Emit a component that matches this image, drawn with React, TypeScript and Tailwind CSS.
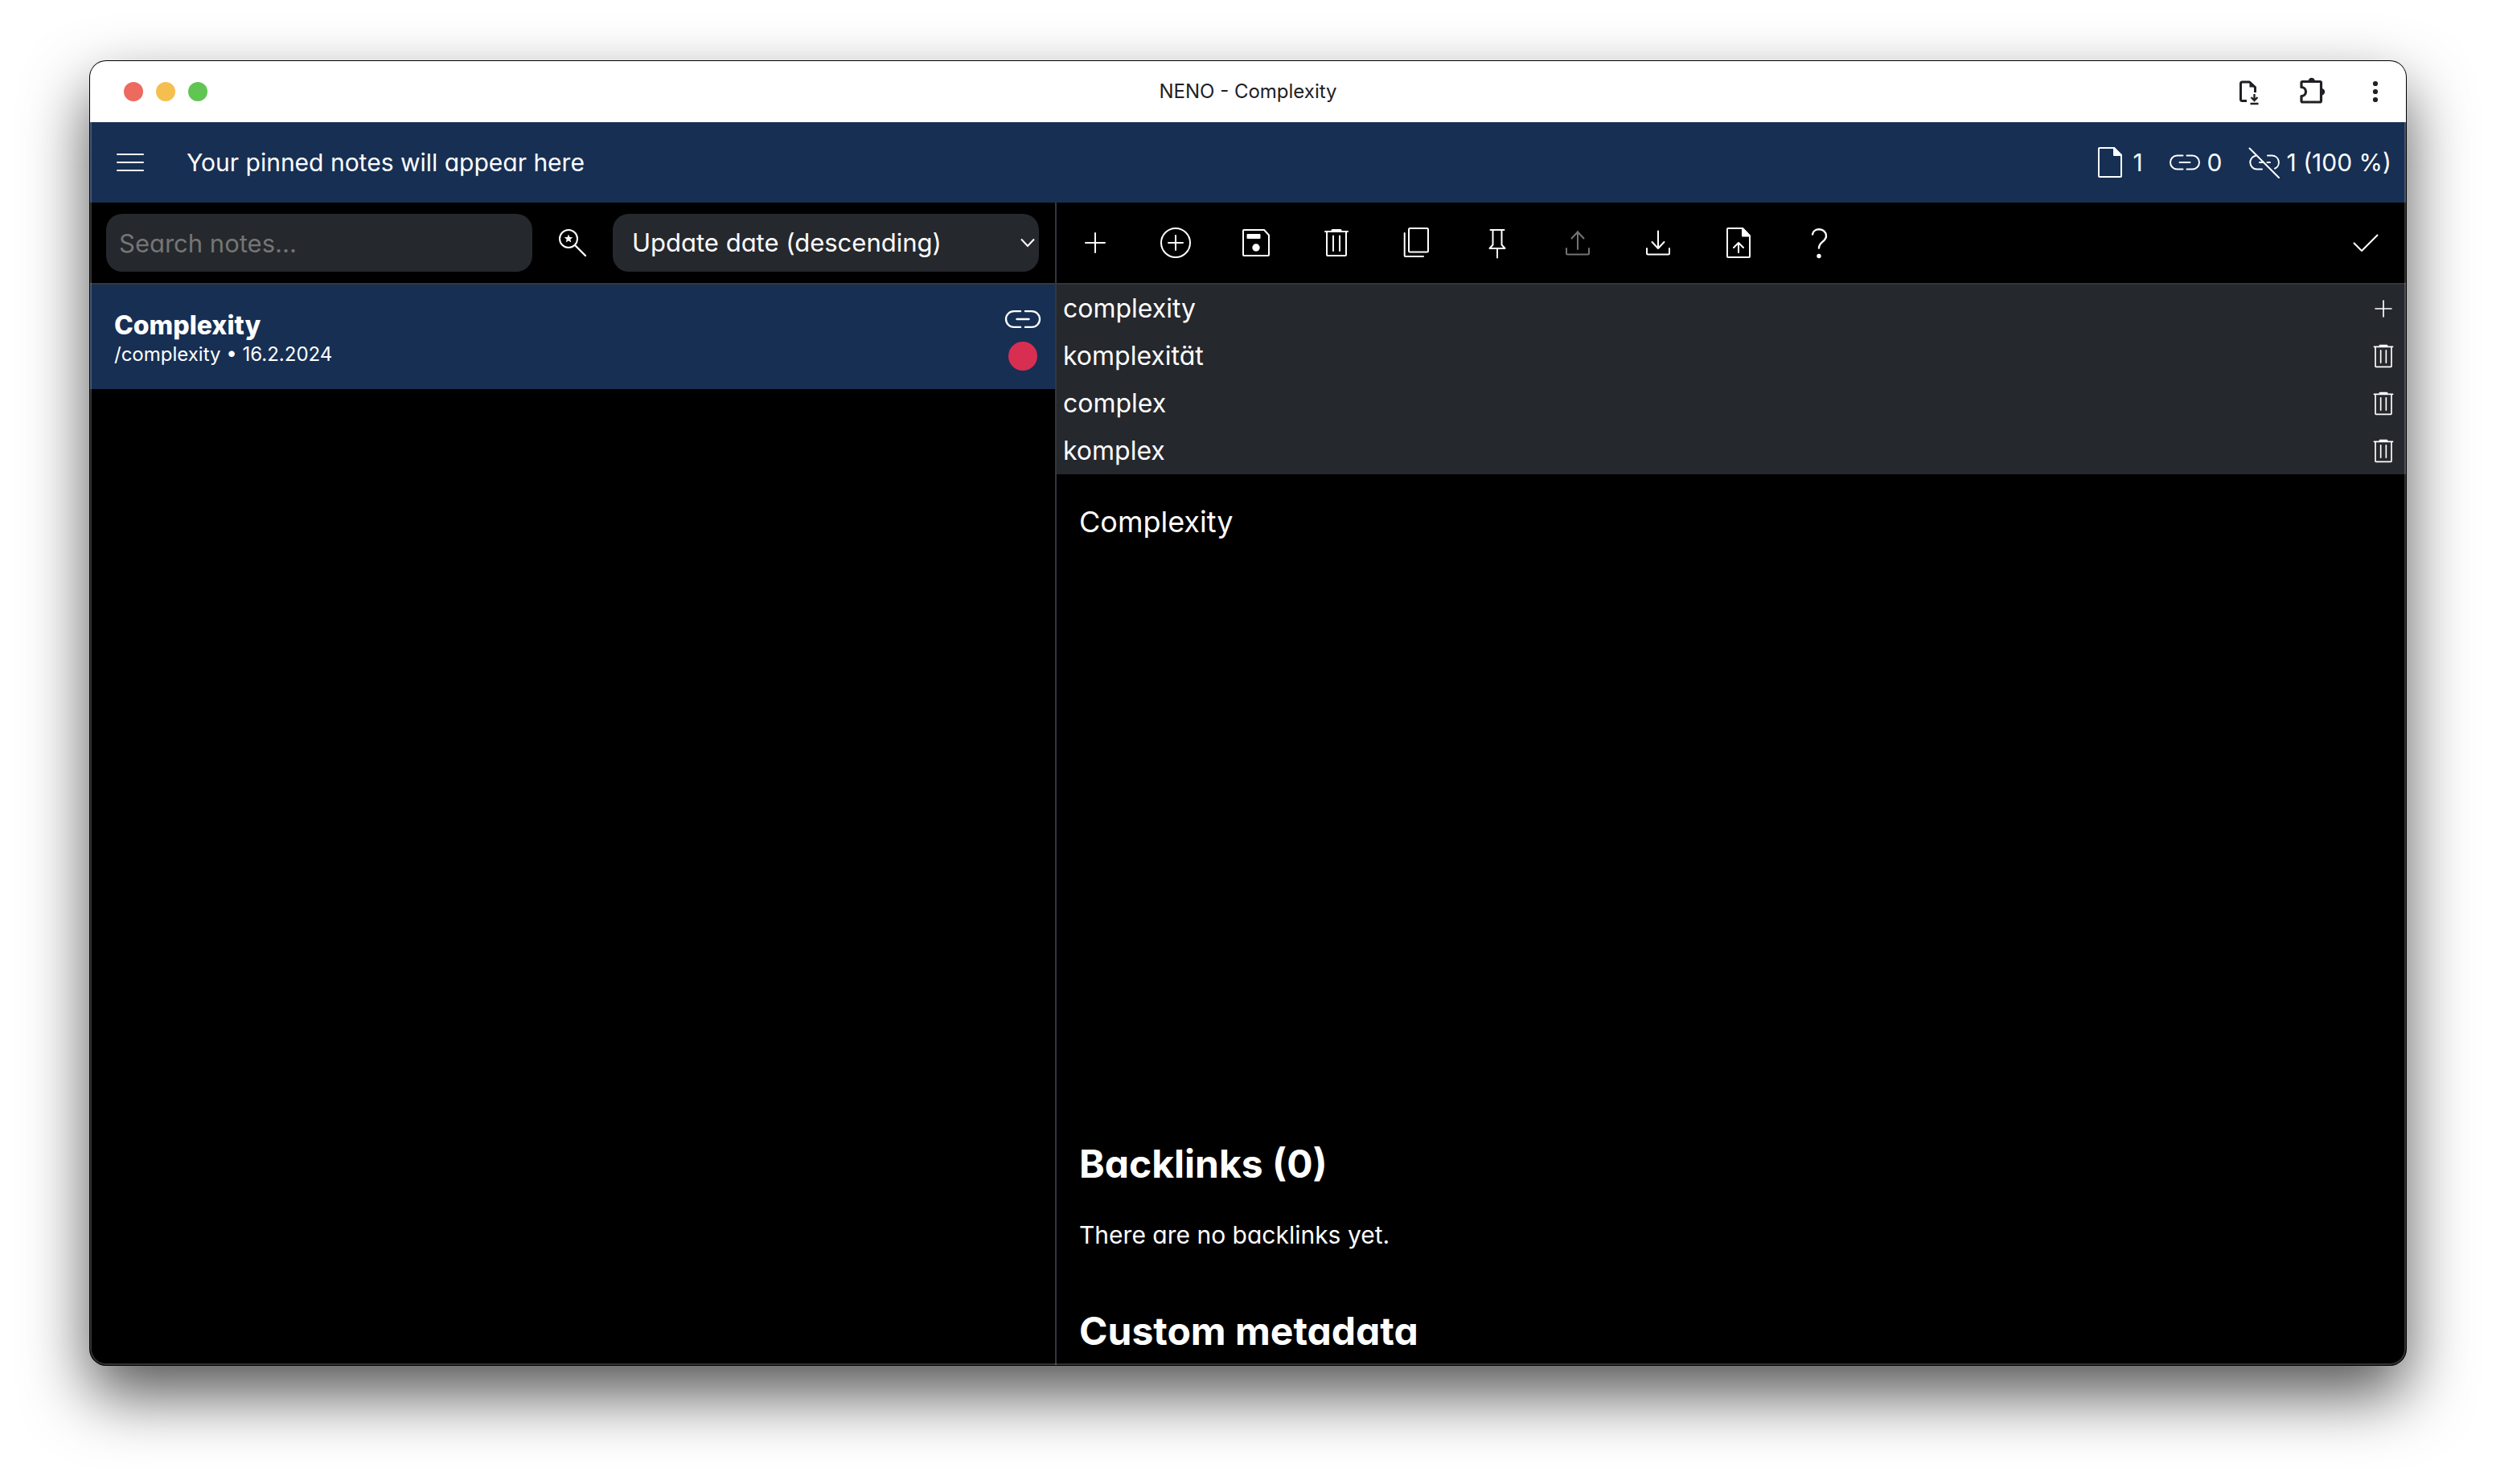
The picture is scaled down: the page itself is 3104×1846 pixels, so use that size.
import type { ReactNode } from "react";

type IconProps = { className?: string; children?: ReactNode };

function Icon({ className = "size-12", children }: IconProps) {
  return (
    <svg
      viewBox="0 0 48 48"
      fill="none"
      stroke="currentColor"
      strokeWidth="2"
      strokeLinecap="round"
      strokeLinejoin="round"
      aria-hidden="true"
      className={`shrink-0 ${className}`}
    >
      {children}
    </svg>
  );
}

const MenuIcon = () => (
  <Icon>
    <path d="M8 14h32M8 24h32M8 34h32" />
  </Icon>
);

const FileIcon = () => (
  <Icon>
    <path d="M11 6H29L38 15V41a1 1 0 0 1-1 1H11a1 1 0 0 1-1-1V7a1 1 0 0 1 1-1Z" />
    <path d="M29 6V15H38Z" fill="currentColor" />
  </Icon>
);

const LinkIcon = ({ className }: IconProps) => (
  <Icon className={className}>
    <path d="M21.5 15.5H14.5a8.5 8.5 0 0 0 0 17H21.5M26.500 15.500H33.500a8.500 8.500 0 0 1 0 17H26.500M17.500 24H30.500" />
  </Icon>
);

const UnlinkIcon = () => (
  <Icon>
    <path d="M5.500 6.500 42 43M13 15.700a8.500 8.500 0 0 0 1.500 16.800H21M28 15.500H33.500a8.500 8.500 0 0 1 3.500 16.200M18 24H21.500M27.500 24H31" />
  </Icon>
);

const SearchStarIcon = () => (
  <Icon>
    <circle cx="19" cy="19" r="11" />
    <path d="M27 27 40 40" strokeWidth="2.400" />
    <path
      d="M19 13.500l1.400 3.600 3.900.2-3 2.400 1 3.800-3.300-2.100-3.300 2.100 1-3.800-3-2.400 3.900-.2Z"
      fill="currentColor"
      stroke="none"
    />
  </Icon>
);

const PlusIcon = ({ className }: IconProps) => (
  <Icon className={className}>
    <path d="M24 12V36M12 24H36" />
  </Icon>
);

const CirclePlusIcon = () => (
  <Icon>
    <circle cx="24" cy="24" r="18" />
    <path d="M24 15V33M15 24H33" />
  </Icon>
);

const SaveIcon = () => (
  <Icon>
    <path d="M9 8H34L40 14.500V39a1 1 0 0 1-1 1H9a1 1 0 0 1-1-1V9a1 1 0 0 1 1-1Z" />
    <rect x="12.500" y="13" width="17" height="6" rx="1" fill="currentColor" stroke="none" />
    <circle cx="24" cy="30" r="4.700" fill="currentColor" stroke="none" />
  </Icon>
);

const TrashIcon = ({ className }: IconProps) => (
  <Icon className={className}>
    <path d="M10 10H38M12 10V39a1 1 0 0 0 1 1H35a1 1 0 0 0 1-1V10M20 15.500V34M28 15.500V34" />
    <path d="M19 8.500H29" strokeWidth="3" />
  </Icon>
);

const CopyIcon = () => (
  <Icon>
    <rect x="14" y="6" width="24" height="29.500" rx="1.500" />
    <path d="M8.700 12V40a1 1 0 0 0 1 1H32" />
  </Icon>
);

const PinIcon = () => (
  <Icon>
    <path d="M15.500 8H32.500M18.500 8V26.500L14.500 31H33.500L29.500 26.500V8M24 31V42.500" />
  </Icon>
);

const UploadIcon = () => (
  <Icon>
    <path d="M24 32V10M16.500 18.500 24 10.500 31.500 18.500M10 31V37a1.500 1.500 0 0 0 1.500 1.500H36.500A1.500 1.500 0 0 0 38 37V31" />
  </Icon>
);

const DownloadIcon = () => (
  <Icon>
    <path d="M24 9.500V31M16.500 23 24 31 31.500 23M10 31V37a1.500 1.500 0 0 0 1.500 1.500H36.500A1.500 1.500 0 0 0 38 37V31" />
  </Icon>
);

const FileUpIcon = () => (
  <Icon>
    <path d="M11 6H29L38 15.500V41a1 1 0 0 1-1 1H11a1 1 0 0 1-1-1V7a1 1 0 0 1 1-1ZM24 36V24M18 30 24 24 30 30" />
    <path d="M29 6V15.500H38Z" fill="currentColor" />
  </Icon>
);

const HelpIcon = () => (
  <Icon>
    <path
      d="M16 13.500C16.500 9.500 20 7.300 24.300 7.300C29.300 7.300 33 10.500 33 15.500C33 22.500 24 23 24 30.500"
      strokeWidth="2.400"
    />
    <circle cx="24" cy="40.500" r="2.700" fill="currentColor" stroke="none" />
  </Icon>
);

const CheckIcon = () => (
  <Icon>
    <path d="M9.500 24.500 19 34 38.500 14.500" />
  </Icon>
);

const InstallIcon = () => (
  <Icon>
    <path d="M20 35.500H14.500a2 2 0 0 1-2-2V14a2 2 0 0 1 2-2H23.500L30.500 18.500V25" strokeWidth="3" strokeLinecap="butt" />
    <path d="M23.500 11.500V18.500H31Z" fill="currentColor" stroke="none" />
    <path d="M29.500 27V34.500M25.500 31 29.500 35 33.500 31" strokeWidth="2.400" strokeLinecap="butt" strokeLinejoin="miter" />
    <path d="M24.500 39H34.500" strokeWidth="2.400" strokeLinecap="butt" />
  </Icon>
);

const PuzzleIcon = () => (
  <Icon>
    <path
      d="M11.500 11.500H33a1.500 1.500 0 0 1 1.500 1.500V35.500a1.500 1.500 0 0 1-1.500 1.500H11.500a1.500 1.500 0 0 1-1.500-1.500V29.500a5.500 5.500 0 0 0 0-11V13a1.500 1.500 0 0 1 1.500-1.500Z"
      strokeWidth="3.200"
    />
    <path d="M18.500 11a4.200 4.200 0 0 1 8.400 0ZM35 20a4.200 4.200 0 0 1 0 8.400Z" fill="currentColor" stroke="none" />
  </Icon>
);

const KebabIcon = () => (
  <Icon>
    <g fill="currentColor" stroke="none">
      <circle cx="24" cy="14" r="3.100" />
      <circle cx="24" cy="24" r="3.100" />
      <circle cx="24" cy="34" r="3.100" />
    </g>
  </Icon>
);

const tools = [
  { label: "New note", icon: <PlusIcon /> },
  { label: "New linked note", icon: <CirclePlusIcon /> },
  { label: "Save note", icon: <SaveIcon /> },
  { label: "Remove note", icon: <TrashIcon /> },
  { label: "Duplicate note", icon: <CopyIcon /> },
  { label: "Pin note", icon: <PinIcon /> },
  { label: "Export note", icon: <UploadIcon />, disabled: true },
  { label: "Import note", icon: <DownloadIcon /> },
  { label: "Upload file", icon: <FileUpIcon /> },
  { label: "Help", icon: <HelpIcon /> },
];

const slugs = ["complexity", "komplexität", "complex", "komplex"];

function TitleBar() {
  return (
    <div className="grid h-[76px] shrink-0 grid-cols-[1fr_auto_1fr] items-center bg-white text-[#202124]">
      <div className="flex gap-4 pl-[42px]">
        <button aria-label="Close" className="size-6 rounded-full bg-[#ed6a5e]" />
        <button aria-label="Minimize" className="size-6 rounded-full bg-[#f5bf4f]" />
        <button aria-label="Maximize" className="size-6 rounded-full bg-[#61c554]" />
      </div>
      <h1 className="text-2xl">NENO - Complexity</h1>
      <div className="flex justify-end gap-[30px] pr-[14px]">
        <button aria-label="Install app"><InstallIcon /></button>
        <button aria-label="Extensions"><PuzzleIcon /></button>
        <button aria-label="More"><KebabIcon /></button>
      </div>
    </div>
  );
}

function AppHeader() {
  return (
    <header className="flex h-[100px] shrink-0 items-center bg-[#172f53] pr-[18px] text-[30px]">
      <button aria-label="Menu" className="flex w-[100px] justify-center">
        <MenuIcon />
      </button>
      <p className="flex-1 pl-5">Your pinned notes will appear here</p>
      <div className="flex items-center gap-7">
        <span className="flex items-center gap-1"><FileIcon />1</span>
        <span className="flex items-center gap-1"><LinkIcon />0</span>
        <span className="flex items-center gap-1"><UnlinkIcon />1 (100 %)</span>
      </div>
    </header>
  );
}

function NoteList() {
  return (
    <section className="flex min-w-0 flex-col">
      <div className="grid h-[102px] shrink-0 grid-cols-[1fr_100px_1fr] items-center border-b-2 border-[#33373d] px-5 text-[31px]">
        <input
          type="search"
          aria-label="Search notes"
          placeholder="Search notes..."
          className="h-[72px] w-full min-w-0 rounded-[20px] bg-[#25282d] px-4 outline-none placeholder:text-[#757575]"
        />
        <button aria-label="Search presets" className="flex justify-center">
          <SearchStarIcon />
        </button>
        <div className="relative min-w-0">
          <select
            aria-label="Sort notes"
            className="h-[72px] w-full appearance-none rounded-[20px] bg-[#25282d] px-6 outline-none"
          >
            <option>Update date (descending)</option>
          </select>
          <svg
            viewBox="0 0 20 12"
            fill="none"
            stroke="currentColor"
            strokeWidth="2"
            aria-hidden="true"
            className="pointer-events-none absolute top-[30px] right-1 h-3 w-5"
          >
            <path d="M2 1.500 10 10 18 1.500" />
          </svg>
        </div>
      </div>
      <button className="flex h-[130px] w-full items-center justify-between bg-[#172f53] pt-2 pr-3 pl-[30px] text-left">
        <span className="flex flex-col">
          <span className="leading-9 font-extrabold">Complexity</span>
          <span className="text-2xl leading-9">/complexity • 16.2.2024</span>
        </span>
        <span className="flex flex-col items-center gap-4">
          <span className="flex h-6 items-center">
            <LinkIcon className="size-14" />
          </span>
          <span className="size-9 rounded-full bg-[#d82e52]" />
        </span>
      </button>
    </section>
  );
}

function NoteView() {
  return (
    <section className="flex min-w-0 flex-col border-l-2 border-[#33373d]">
      <div className="-ml-0.5 flex h-[102px] shrink-0 border-b-2 border-[#33373d]">
        {tools.map((tool) => (
          <button
            key={tool.label}
            aria-label={tool.label}
            disabled={tool.disabled}
            className="flex w-[100px] items-center justify-center disabled:text-[#737373]"
          >
            {tool.icon}
          </button>
        ))}
        <div role="status" aria-label="Saved" className="ml-auto flex w-[100px] items-center justify-center">
          <CheckIcon />
        </div>
      </div>
      <div className="bg-[#25282d]">
        {slugs.map((slug, i) => (
          <div key={slug} className="flex h-[59px] items-center px-2">
            <input
              aria-label={i === 0 ? "Slug" : `Alias ${i}`}
              defaultValue={slug}
              className="min-w-0 flex-1 bg-transparent outline-none"
            />
            <button aria-label={i === 0 ? "Add alias" : `Remove alias ${slug}`}>
              {i === 0 ? <PlusIcon className="size-10" /> : <TrashIcon className="size-10" />}
            </button>
          </div>
        ))}
      </div>
      <div className="flex flex-col px-7">
        <textarea
          aria-label="Note content"
          defaultValue="Complexity"
          className="h-[790px] resize-none bg-transparent pt-9 text-[36px] leading-[46px] outline-none"
        />
        <h2 className="pt-10 text-[48px] leading-[56px] font-bold">Backlinks (0)</h2>
        <p className="pt-10 text-[30px] leading-10">There are no backlinks yet.</p>
        <h2 className="pt-[72px] text-[48px] leading-[56px] font-bold">Custom metadata</h2>
      </div>
    </section>
  );
}

export default function App() {
  return (
    <div className="flex h-screen flex-col bg-white px-28 pt-[76px] pb-[148px] font-[Inter,sans-serif] text-[32px] leading-10 text-white">
      <main className="relative flex min-h-0 flex-1 flex-col overflow-hidden rounded-[20px] bg-black shadow-[0_0_0_1px_#000,0_36px_80px_rgba(0,0,0,0.68)]">
        <TitleBar />
        <div className="flex min-h-0 flex-1 flex-col [font-feature-settings:'cv11']">
          <AppHeader />
          <div className="grid min-h-0 flex-1 grid-cols-[5fr_7fr] overflow-hidden">
            <NoteList />
            <NoteView />
          </div>
        </div>
        <div className="pointer-events-none absolute inset-0 rounded-[20px] border-2 border-t-0 border-white/20" />
      </main>
    </div>
  );
}
